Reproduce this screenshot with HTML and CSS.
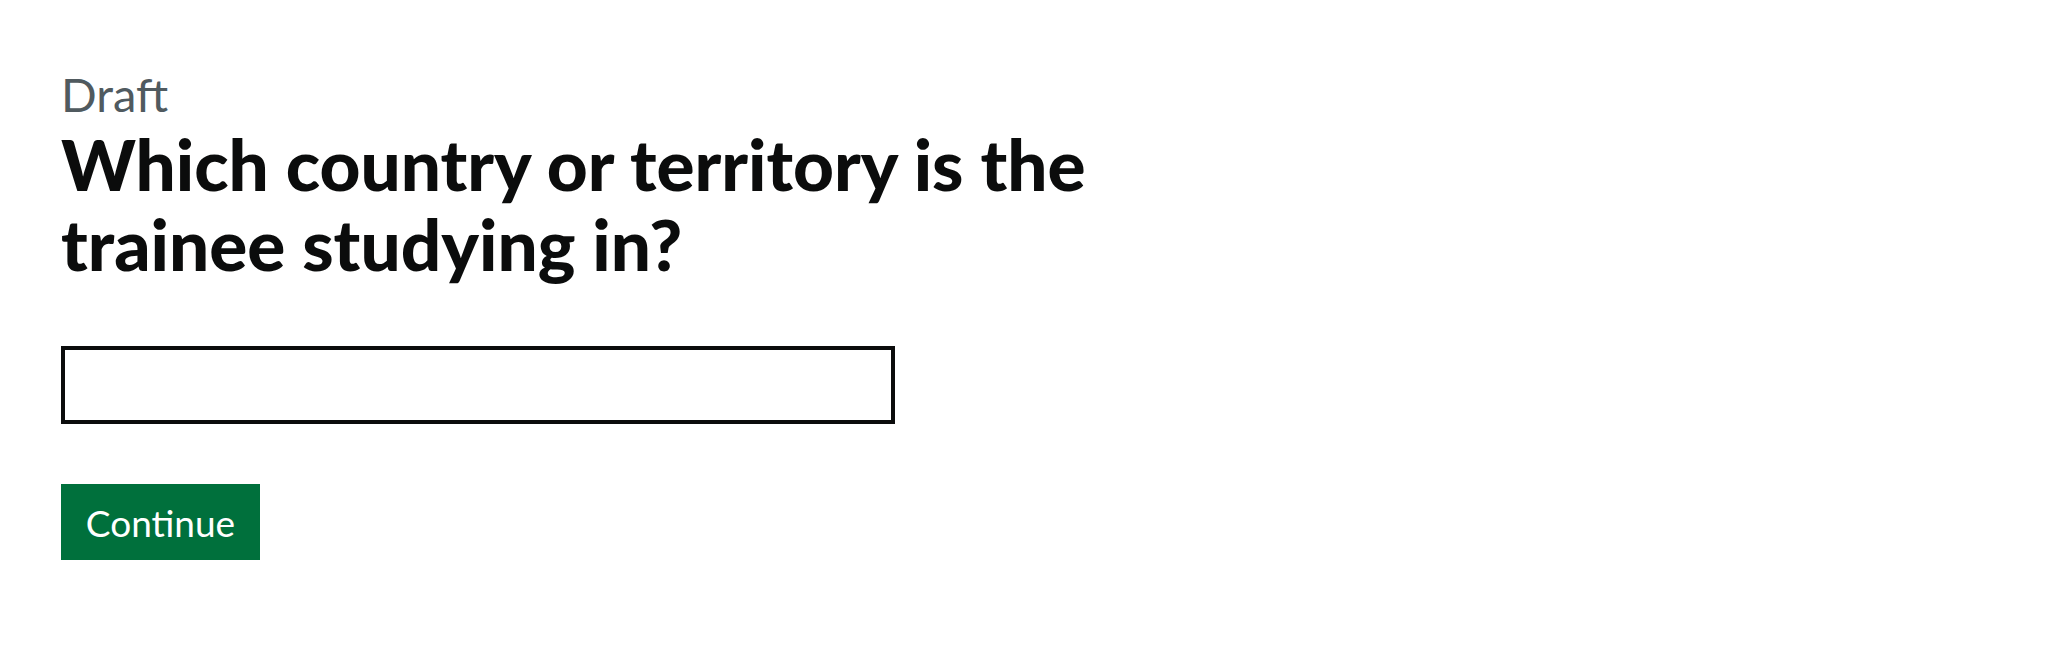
FILE: index.html
```html
<!DOCTYPE html>
<html lang="en">
<head>
<meta charset="utf-8">
<title>Which country or territory is the trainee studying in?</title>
<link rel="stylesheet" href="styles.css">
</head>
<body>
<main class="page">
  <form class="form">
    <label class="question" for="country">
      <span class="caption">Draft</span>
      <span class="heading">Which country or territory is the trainee studying in?</span>
    </label>
    <input class="input" id="country" type="text">
    <button class="button" type="button">Continue</button>
  </form>
</main>
</body>
</html>
```

FILE: styles.css
```css
html, body {
  margin: 0;
  padding: 0;
  background: #ffffff;
}
body {
  font-family: Lato, "Liberation Sans", Arial, sans-serif;
  color: #0b0c0c;
}
.page {
  padding: 64px 61px 0 61px;
}
.form {
  display: flex;
  flex-direction: column;
  align-items: flex-start;
}
.question {
  display: flex;
  flex-direction: column;
}
.caption {
  font-size: 47px;
  line-height: 60px;
  color: #505a5f;
}
.heading {
  font-weight: 900;
  font-size: 71px;
  line-height: 80px;
  max-width: 1100px;
}
.input {
  box-sizing: border-box;
  margin-top: 62px;
  width: 834px;
  height: 78px;
  border: 4px solid #0b0c0c;
  border-radius: 0;
  padding: 0 10px;
  font: inherit;
  font-size: 38px;
  background: #fff;
}
.button {
  margin-top: 60px;
  box-sizing: border-box;
  width: 199px;
  height: 76px;
  border: 0;
  border-radius: 0;
  background: #00703c;
  box-shadow: 0 4px 0 #002d18;
  color: #ffffff;
  font-family: Lato, "Liberation Sans", Arial, sans-serif;
  font-size: 37px;
  padding: 0;
}
```
